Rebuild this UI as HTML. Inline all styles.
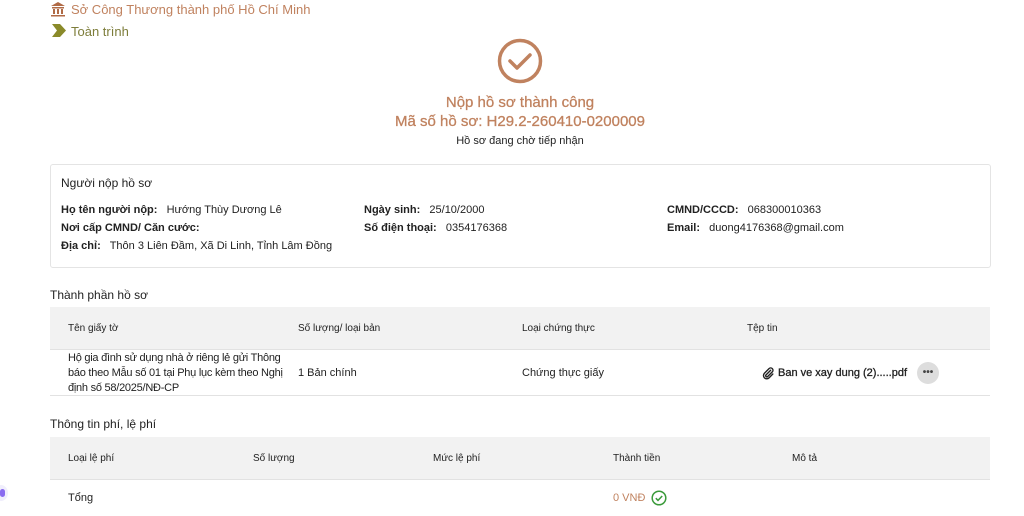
<!DOCTYPE html>
<html><head><meta charset="utf-8"><style>
*{margin:0;padding:0;box-sizing:border-box}
body{width:1024px;height:516px;overflow:hidden;background:#fff;font-family:"Liberation Sans",sans-serif;color:#222;position:relative}
.a{position:absolute;white-space:nowrap}
.brown{color:#c0825f}
.f11{font-size:11px}
.b{font-weight:bold}
.hdr{position:absolute;left:50px;width:940px;background:#f2f2f2;border-bottom:1px solid #e2e2e2}
</style></head><body>
<svg class="a" style="left:50px;top:1px" width="16" height="16" viewBox="0 0 16 16"><path d="M8 1L1 5h14z M2 6h12v1.5H2z M3 8h2v5H3z M7 8h2v5H7z M11 8h2v5h-2z M1 14h14v1.5H1z" fill="#b06a45"/></svg>
<div class="a brown" style="left:71px;top:2px;font-size:13px">Sở Công Thương thành phố Hồ Chí Minh</div>
<svg class="a" style="left:52px;top:24px" width="14" height="13" viewBox="0 0 14 13"><path d="M0 0h8l6 6.5L8 13H0l5-6.5z" fill="#8a8a2a"/></svg>
<div class="a" style="left:71px;top:24px;font-size:13px;color:#7d7d3a">Toàn trình</div>
<svg class="a" style="left:497px;top:38px" width="46" height="46" viewBox="0 0 46 46"><circle cx="23" cy="23" r="20.5" fill="none" stroke="#c0825f" stroke-width="3.5"/><path d="M13 23l7 7 13-13" fill="none" stroke="#c0825f" stroke-width="3.5" stroke-linecap="round" stroke-linejoin="round"/></svg>
<div class="a brown" style="left:0;width:1040px;text-align:center;top:94px;font-size:15px;-webkit-text-stroke:0.3px #c0825f">Nộp hồ sơ thành công</div>
<div class="a brown" style="left:0;width:1040px;text-align:center;top:113px;font-size:15px;-webkit-text-stroke:0.3px #c0825f">Mã số hồ sơ: H29.2-260410-0200009</div>
<div class="a f11" style="left:0;width:1040px;text-align:center;top:135px">Hồ sơ đang chờ tiếp nhận</div>
<div class="a" style="left:50px;top:164px;width:941px;height:104px;border:1px solid #e4e4e4;border-radius:3px"></div>
<div class="a" style="left:61px;top:176px;font-size:12px">Người nộp hồ sơ</div>
<div class="a f11" style="left:61px;top:204px"><span class="b">Họ tên người nộp:</span>&nbsp;&nbsp; Hướng Thùy Dương Lê</div>
<div class="a f11 b" style="left:61px;top:222px">Nơi cấp CMND/ Căn cước:</div>
<div class="a f11" style="left:61px;top:240px"><span class="b">Địa chỉ:</span>&nbsp;&nbsp; Thôn 3 Liên Đầm, Xã Di Linh, Tỉnh Lâm Đồng</div>
<div class="a f11" style="left:364px;top:204px"><span class="b">Ngày sinh:</span>&nbsp;&nbsp; 25/10/2000</div>
<div class="a f11" style="left:364px;top:222px"><span class="b">Số điện thoại:</span>&nbsp;&nbsp; 0354176368</div>
<div class="a f11" style="left:667px;top:204px"><span class="b">CMND/CCCD:</span>&nbsp;&nbsp; 068300010363</div>
<div class="a f11" style="left:667px;top:222px"><span class="b">Email:</span>&nbsp;&nbsp; duong4176368@gmail.com</div>
<div class="a" style="left:50px;top:288px;font-size:12px">Thành phần hồ sơ</div>
<div class="hdr" style="top:307px;height:43px"></div>
<div class="a" style="font-size:10px;left:68px;top:323px">Tên giấy tờ</div>
<div class="a" style="font-size:10px;left:298px;top:323px">Số lượng/ loại bản</div>
<div class="a" style="font-size:10px;left:522px;top:323px">Loại chứng thực</div>
<div class="a" style="font-size:10px;left:747px;top:323px">Tệp tin</div>
<div class="a" style="left:50px;top:395px;width:940px;border-top:1px solid #e2e2e2"></div>
<div class="a f11" style="left:68px;top:351px;line-height:15px;white-space:normal;width:222px;letter-spacing:-0.25px">Hộ gia đình sử dụng nhà ở riêng lẻ gửi Thông báo theo Mẫu số 01 tại Phụ lục kèm theo Nghị định số 58/2025/NĐ-CP</div>
<div class="a f11" style="left:298px;top:367px">1 Bản chính</div>
<div class="a f11" style="left:522px;top:367px">Chứng thực giấy</div>
<svg class="a" style="left:762px;top:367px" width="13" height="13" viewBox="0 0 24 24"><path d="M16 6l-8.5 8.5a2 2 0 0 0 3 3L19 9a4 4 0 0 0-6-6L4.5 11.5a6 6 0 0 0 8.5 8.5L20 13" fill="none" stroke="#222" stroke-width="2.6" stroke-linecap="round"/></svg>
<div class="a f11" style="left:778px;top:367px;-webkit-text-stroke:0.3px #222">Ban ve xay dung (2).....pdf</div>
<div class="a" style="left:917px;top:362px;width:22px;height:22px;border-radius:50%;background:#ddd;text-align:center;font-size:10px;line-height:22px;font-weight:bold;color:#444">•••</div>
<div class="a" style="left:50px;top:417px;font-size:12px">Thông tin phí, lệ phí</div>
<div class="hdr" style="top:437px;height:43px"></div>
<div class="a" style="font-size:10px;left:68px;top:453px">Loại lệ phí</div>
<div class="a" style="font-size:10px;left:253px;top:453px">Số lượng</div>
<div class="a" style="font-size:10px;left:433px;top:453px">Mức lệ phí</div>
<div class="a" style="font-size:10px;left:613px;top:453px">Thành tiền</div>
<div class="a" style="font-size:10px;left:792px;top:453px">Mô tả</div>
<div class="a f11" style="left:68px;top:492px">Tổng</div>
<div class="a f11 brown" style="left:613px;top:492px">0 VNĐ</div>
<svg class="a" style="left:651px;top:490px" width="16" height="16" viewBox="0 0 16 16"><circle cx="8" cy="8" r="6.8" fill="none" stroke="#3a9a3a" stroke-width="1.5"/><path d="M4.8 8.2l2.2 2.2 4.2-4.4" fill="none" stroke="#3a9a3a" stroke-width="1.5"/></svg>
<div class="a" style="left:-6px;top:485px;width:14px;height:16px;border-radius:50%;background:#f0eefc"></div>
<div class="a" style="left:0;top:489px;width:5px;height:8px;border-radius:3px;background:#8a6cf0"></div>
</body></html>
